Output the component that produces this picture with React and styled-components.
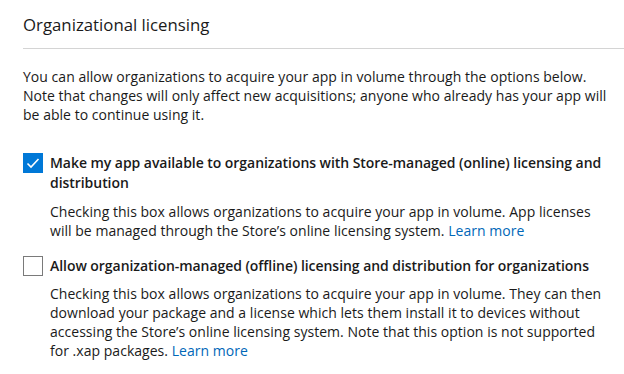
import React from 'react';
import styled, { createGlobalStyle } from 'styled-components';

const GlobalStyle = createGlobalStyle`
	html, body {
		margin: 0;
		padding: 0;
		background: #fff;
	}
	body {
		font-family: 'Open Sans', 'Noto Sans', sans-serif;
		color: #1a1a1a;
	}
`

const Page = styled.div`
	padding: 12px 0 0 23px;
	width: 601px;
`

const Heading = styled.h2`
	margin: 0;
	padding-bottom: 10px;
	font-size: 16.8px;
	font-weight: 400;
	line-height: 26px;
	border-bottom: 1px solid #d4d4d4;
`

const Intro = styled.p`
	margin: 18px 0 0;
	font-size: 14px;
	line-height: 19px;
	letter-spacing: 0.03px;
	white-space: nowrap;
`

const Option = styled.div`
	display: grid;
	grid-template-columns: 20px 1fr;
	column-gap: 7px;
	margin-top: ${p => p.$gap}px;
`

const Box = styled.div`
	width: 20px;
	height: 20px;
	box-sizing: border-box;
	display: flex;
	align-items: center;
	justify-content: center;
	background: ${p => (p.$checked ? '#0078d7' : '#fff')};
	border: ${p => (p.$checked ? '2px solid #0078d7' : '1.5px solid #7a7a7a')};
`

const Label = styled.div`
	font-size: 14px;
	font-weight: 600;
	line-height: 20px;
	letter-spacing: -0.05px;
	white-space: nowrap;
`

const Desc = styled.p`
	grid-column: 2;
	margin: ${p => p.$gap}px 0 0;
	font-size: 14px;
	line-height: 19px;
	letter-spacing: 0.03px;
	white-space: nowrap;
`

const Link = styled.a`
	color: #0067b8;
	text-decoration: none;
`

const Check = () => (
	<svg width="14" height="14" viewBox="0 0 14 14">
		<path d="M1.5 7.5 L5 11 L12.5 3" fill="none" stroke="#fff" strokeWidth="1.6" />
	</svg>
)

const App = () => {
	return (
		<>
			<GlobalStyle />
			<Page>
				<Heading>Organizational licensing</Heading>
				<Intro>
					You can allow organizations to acquire your app in volume through the options below.<br />
					Note that changes will only affect new acquisitions; anyone who already has your app will<br />
					be able to continue using it.
				</Intro>
				<Option $gap={29}>
					<Box $checked><Check /></Box>
					<Label>Make my app available to organizations with Store-managed (online) licensing and<br />distribution</Label>
					<Desc $gap={9}>
						Checking this box allows organizations to acquire your app in volume. App licenses<br />
						will be managed through the Store’s online licensing system. <Link href="#">Learn more</Link>
					</Desc>
				</Option>
				<Option $gap={16}>
					<Box />
					<Label>Allow organization-managed (offline) licensing and distribution for organizations</Label>
					<Desc $gap={8}>
						Checking this box allows organizations to acquire your app in volume. They can then<br />
						download your package and a license which lets them install it to devices without<br />
						accessing the Store’s online licensing system. Note that this option is not supported<br />
						for .xap packages. <Link href="#">Learn more</Link>
					</Desc>
				</Option>
			</Page>
		</>
	);
}

export default App;
